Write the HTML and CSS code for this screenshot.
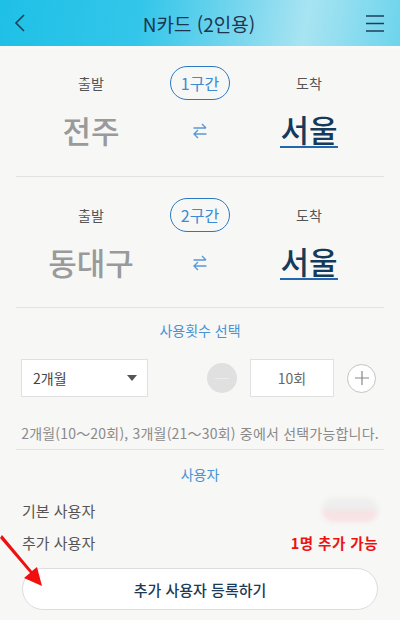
FILE: index.html
```html
<!DOCTYPE html>
<html lang="ko">
<head>
    <meta charset="UTF-8">
    <meta name="viewport" content="width=device-width, initial-scale=1.0">
    <title>N카드 (2인용)</title>
    <link rel="stylesheet" href="styles.css">
</head>
<body>
    <header class="topbar">
        <span class="back">
            <svg width="12" height="18" viewBox="0 0 12 18"><path d="M10 1 L2 9 L10 17" fill="none" stroke="#1d3f5c" stroke-width="1.6"/></svg>
        </span>
        <h1 class="title">N카드 (2인용)</h1>
        <span class="menu">
            <svg width="18" height="18" viewBox="0 0 18 18"><path d="M0 2 H18 M0 9.5 H18 M0 17 H18" stroke="#1d3f5c" stroke-width="1.6"/></svg>
        </span>
    </header>

    <main>
        <!-- 구간 선택 -->
        <section class="route">
            <div class="route-row">
                <span class="label">출발</span>
                <span class="pill">1구간</span>
                <span class="label">도착</span>
            </div>
            <div class="route-row cities">
                <span class="city from">전주</span>
                <span class="swap">
                    <svg width="16" height="20" viewBox="0 0 16 20"><path d="M1.5 7 H14 M10 3 L14 7 M14.5 13 H2 M6 9 L2 13 L6 17" fill="none" stroke="#5a9ad6" stroke-width="1.4"/></svg>
                </span>
                <span class="city to"><span class="to-text">서울</span></span>
            </div>
        </section>

        <section class="route">
            <div class="route-row">
                <span class="label">출발</span>
                <span class="pill">2구간</span>
                <span class="label">도착</span>
            </div>
            <div class="route-row cities">
                <span class="city from">동대구</span>
                <span class="swap">
                    <svg width="16" height="20" viewBox="0 0 16 20"><path d="M1.5 7 H14 M10 3 L14 7 M14.5 13 H2 M6 9 L2 13 L6 17" fill="none" stroke="#5a9ad6" stroke-width="1.4"/></svg>
                </span>
                <span class="city to"><span class="to-text">서울</span></span>
            </div>
        </section>

        <!-- 사용횟수 -->
        <section class="count">
            <h2 class="sub-title">사용횟수 선택</h2>
            <div class="controls">
                <div class="select">
                    <span>2개월</span>
                    <span class="caret"></span>
                </div>
                <span class="round minus"><span class="bar"></span></span>
                <div class="num">10회</div>
                <span class="round plus">
                    <svg width="14" height="14" viewBox="0 0 14 14"><path d="M0 7 H14 M7 0 V14" stroke="#888" stroke-width="1.2"/></svg>
                </span>
            </div>
            <p class="info">2개월(10～20회), 3개월(21～30회) 중에서 선택가능합니다.</p>
        </section>

        <!-- 사용자 -->
        <section class="users">
            <h2 class="sub-title">사용자</h2>
            <div class="user-row">
                <span>기본 사용자</span>
                <span class="blurred"></span>
            </div>
            <div class="user-row">
                <span>추가 사용자</span>
                <span class="more">1명 추가 가능</span>
            </div>
            <button class="add-btn">추가 사용자 등록하기</button>
        </section>
    </main>

    <svg class="pointer" width="50" height="60" viewBox="0 0 50 60">
        <path d="M0 6 L30 41 L24 46 L42 54 L37 35 L32 39 L2 3 Z" fill="#f01010"/>
    </svg>
</body>
</html>
```

FILE: styles.css
```css
body {
    margin: 0;
    width: 400px;
    height: 620px;
    overflow: hidden;
    position: relative;
    background: #f7f7f6;
    font-family: "Noto Sans CJK KR", "Noto Sans", sans-serif;
    color: #555;
}

.topbar {
    height: 46px;
    display: flex;
    align-items: center;
    justify-content: space-between;
    padding: 0 16px 0 14px;
    background: linear-gradient(100deg, #1fc0e6 0%, #33c6ea 35%, #7fd8ee 62%, #a8e4f2 76%, #6dd4ec 100%);
    border-bottom: 3px solid #f9f9f9;
}

.back, .menu {
    display: flex;
    width: 20px;
}

.menu {
    justify-content: flex-end;
}

.title {
    margin: 0;
    font-size: 19px;
    font-weight: 400;
    color: #1d3550;
}

main {
    display: block;
}

.route {
    margin: 0 16px;
    padding: 16px 0 29px;
    border-bottom: 1px solid #e3e3e3;
}

.route + .route {
    padding: 20px 0 28px;
}

.route-row {
    display: grid;
    grid-template-columns: 150px 68px 150px;
    align-items: center;
    justify-items: center;
    height: 36px;
}

.label {
    font-size: 14px;
    color: #555;
}

.pill {
    width: 60px;
    height: 34px;
    box-sizing: border-box;
    border: 1px solid #2b78c2;
    border-radius: 18px;
    display: flex;
    align-items: center;
    justify-content: center;
    font-size: 16px;
    color: #3d8bd2;
}

.cities {
    margin-top: 10px;
}

.city {
    font-size: 31px;
    font-weight: 500;
    line-height: 36px;
}

.from {
    color: #9a9a9a;
}

.to-text {
    display: inline-block;
    color: #143a5c;
    border-bottom: 2px solid #2266b0;
    line-height: 34px;
}

.swap {
    display: flex;
    padding-top: 2px;
}

.count {
    margin: 0 16px;
    border-bottom: 1px solid #e3e3e3;
}

.sub-title {
    margin: 0;
    padding-top: 12px;
    font-size: 14px;
    font-weight: 400;
    line-height: 20px;
    text-align: center;
    color: #4a92d2;
}

.controls {
    display: flex;
    align-items: center;
    margin-top: 19px;
    padding: 0 8px 0 5px;
    height: 38px;
}

.select {
    width: 127px;
    height: 38px;
    box-sizing: border-box;
    background: #fff;
    border: 1px solid #e0e0e0;
    display: flex;
    align-items: center;
    justify-content: space-between;
    padding: 0 10px 0 11px;
    font-size: 14px;
    color: #444;
}

.caret {
    width: 0;
    height: 0;
    border-left: 5px solid transparent;
    border-right: 5px solid transparent;
    border-top: 6px solid #555;
}

.round {
    box-sizing: border-box;
    border-radius: 50%;
    display: flex;
    align-items: center;
    justify-content: center;
}

.minus {
    width: 30px;
    height: 30px;
    margin-left: auto;
    background: #e0e0e0;
}

.minus .bar {
    width: 14px;
    height: 1px;
    background: #ececec;
}

.num {
    width: 84px;
    height: 38px;
    box-sizing: border-box;
    margin-left: 13px;
    background: #fff;
    border: 1px solid #e0e0e0;
    display: flex;
    align-items: center;
    justify-content: center;
    font-size: 14px;
    color: #666;
}

.plus {
    width: 29px;
    height: 29px;
    margin-left: 13px;
    background: #fff;
    border: 1px solid #c4c4c4;
}

.info {
    margin: 26px 0 0;
    padding-bottom: 6px;
    font-size: 14px;
    line-height: 20px;
    letter-spacing: 0.2px;
    color: #8a8a8a;
    text-align: center;
    white-space: nowrap;
}

.users {
    margin: 0 16px;
}

.users .sub-title {
    padding-top: 14px;
}

.user-row {
    display: flex;
    justify-content: space-between;
    align-items: center;
    height: 32px;
    padding: 0 6px;
    font-size: 15px;
    color: #555;
}

.users .sub-title + .user-row {
    margin-top: 10px;
}

.blurred {
    width: 56px;
    height: 24px;
    background: linear-gradient(#eeeeee 50%, #f7e2e4 50%);
    border-radius: 12px;
    filter: blur(2px);
}

.more {
    color: #ee1111;
    font-weight: 700;
    font-size: 14.5px;
    letter-spacing: 0.5px;
}

.add-btn {
    display: block;
    width: 356px;
    height: 42px;
    margin: 10px 0 0 6px;
    background: #fff;
    border: 1px solid #dcdcdc;
    border-radius: 21px;
    font-family: inherit;
    font-size: 15px;
    font-weight: 500;
    color: #1d3a56;
}

.pointer {
    position: absolute;
    left: 0;
    top: 532px;
}
```
